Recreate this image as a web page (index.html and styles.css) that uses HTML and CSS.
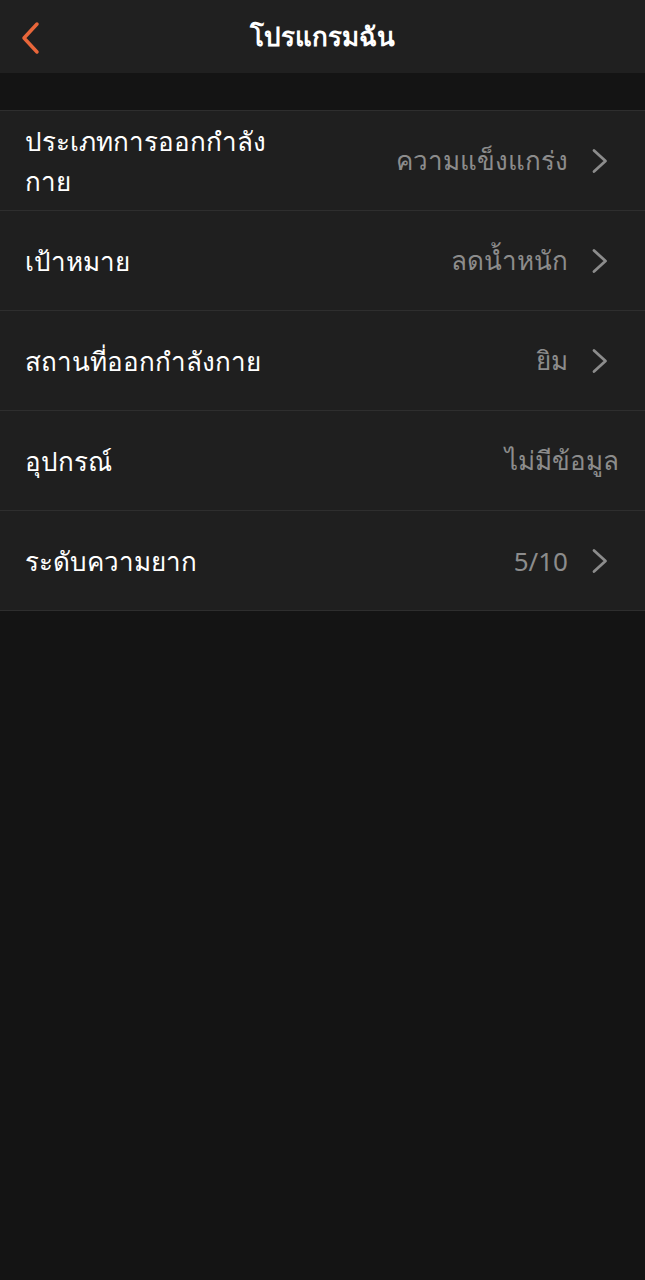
FILE: index.html
```html
<!DOCTYPE html>
<html lang="th">
<head>
    <meta charset="UTF-8">
    <meta name="viewport" content="width=device-width, initial-scale=1.0">
    <title>โปรแกรมฉัน</title>
    <link rel="stylesheet" href="styles.css">
</head>
<body>
    <div class="nav-bar">
        <svg class="back-icon" width="22" height="34" viewBox="0 0 22 34">
            <path d="M18 3 L5 17 L18 31" fill="none" stroke="#e8663a" stroke-width="3.5" stroke-linecap="round" stroke-linejoin="round"/>
        </svg>
        <div class="nav-title">โปรแกรมฉัน</div>
    </div>
    <div class="spacer"></div>
    <div class="settings-list">
        <div class="setting-row">
            <div class="setting-label">ประเภทการออกกำลัง<br>กาย</div>
            <div class="setting-value">ความแข็งแกร่ง</div>
            <svg class="chevron" width="18" height="28" viewBox="0 0 18 28"><path d="M3 3.5 L14.5 14 L3 24.5" fill="none" stroke="#8c8c8c" stroke-width="2.8" stroke-linecap="round" stroke-linejoin="round"/></svg>
        </div>
        <div class="setting-row">
            <div class="setting-label">เป้าหมาย</div>
            <div class="setting-value">ลดน้ำหนัก</div>
            <svg class="chevron" width="18" height="28" viewBox="0 0 18 28"><path d="M3 3.5 L14.5 14 L3 24.5" fill="none" stroke="#8c8c8c" stroke-width="2.8" stroke-linecap="round" stroke-linejoin="round"/></svg>
        </div>
        <div class="setting-row">
            <div class="setting-label">สถานที่ออกกำลังกาย</div>
            <div class="setting-value">ยิม</div>
            <svg class="chevron" width="18" height="28" viewBox="0 0 18 28"><path d="M3 3.5 L14.5 14 L3 24.5" fill="none" stroke="#8c8c8c" stroke-width="2.8" stroke-linecap="round" stroke-linejoin="round"/></svg>
        </div>
        <div class="setting-row no-arrow">
            <div class="setting-label">อุปกรณ์</div>
            <div class="setting-value">ไม่มีข้อมูล</div>
        </div>
        <div class="setting-row">
            <div class="setting-label">ระดับความยาก</div>
            <div class="setting-value">5/10</div>
            <svg class="chevron" width="18" height="28" viewBox="0 0 18 28"><path d="M3 3.5 L14.5 14 L3 24.5" fill="none" stroke="#8c8c8c" stroke-width="2.8" stroke-linecap="round" stroke-linejoin="round"/></svg>
        </div>
    </div>
</body>
</html>
```

FILE: styles.css
```css
body {
    margin: 0;
    background: #141414;
    color: #ffffff;
    font-family: "Noto Sans", "DejaVu Sans", sans-serif;
    min-height: 1280px;
}
.nav-bar {
    height: 73px;
    background: #202020;
    display: flex;
    align-items: center;
    justify-content: center;
    position: relative;
}
.back-icon {
    position: absolute;
    left: 19px;
    top: 21px;
}
.nav-title {
    font-size: 26px;
    font-weight: bold;
}
.spacer {
    height: 37px;
}
.settings-list {
    background: #1f1f1f;
    border-top: 1px solid #2e2e2e;
}
.setting-row {
    height: 99px;
    display: flex;
    align-items: center;
    padding: 0 36px 0 25px;
    border-bottom: 1px solid #2e2e2e;
}
.setting-row.no-arrow {
    padding-right: 26px;
}
.setting-label {
    flex: 1;
    font-size: 26px;
    line-height: 40px;
}
.setting-value {
    font-size: 26px;
    color: #8c8c8c;
}
.chevron {
    margin-left: 23px;
}
```
